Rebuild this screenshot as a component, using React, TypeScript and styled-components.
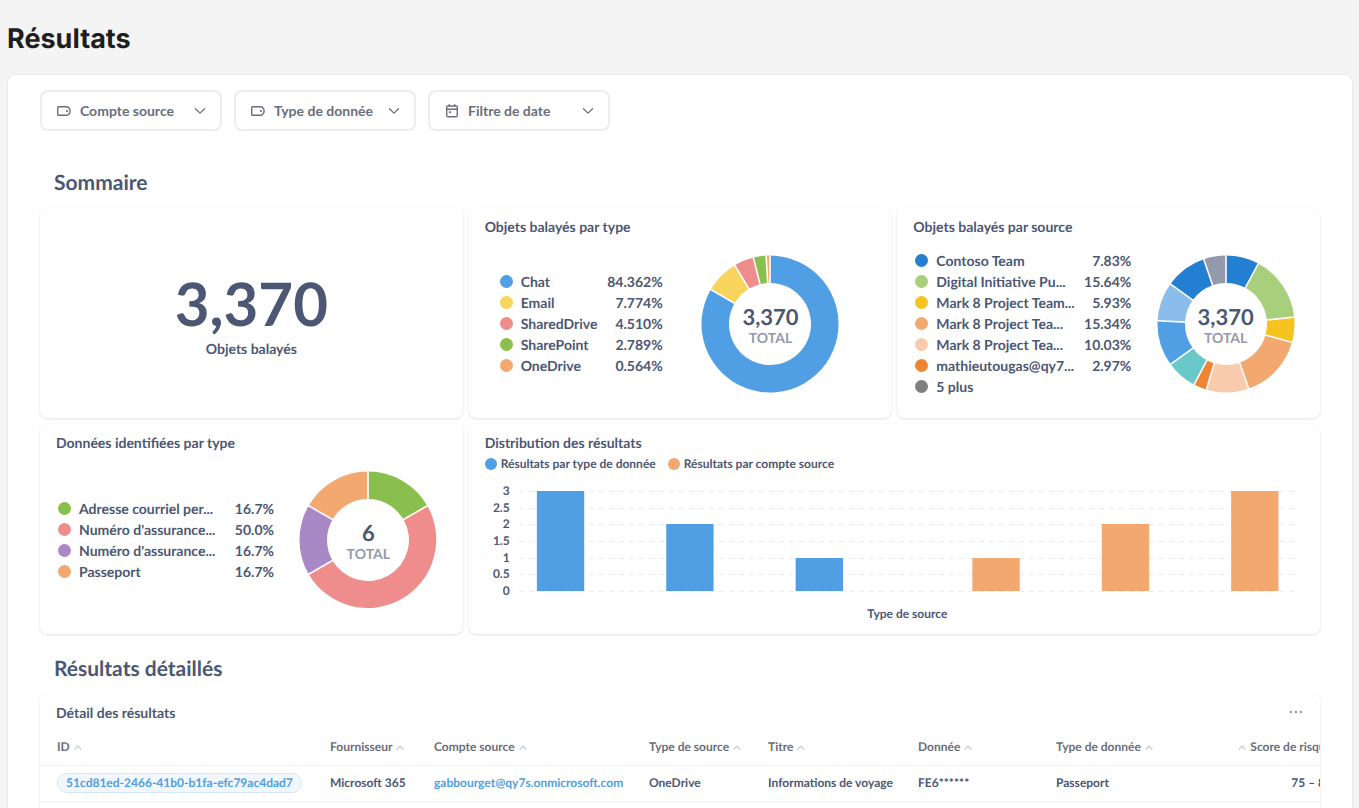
import React from "react";
import styled, { createGlobalStyle } from "styled-components";

const GlobalStyle = createGlobalStyle`
  *, *::before, *::after { box-sizing: border-box; }
  body {
    margin: 0;
    background: #f4f4f4;
    color: #4c5773;
    font-family: Lato, "Liberation Sans", sans-serif;
    font-weight: 700;
    text-rendering: geometricPrecision;
  }
`;

const Page = styled.div`
  min-height: 100vh;
  display: flex;
  flex-direction: column;
  padding: 0 6px 0 7px;
`;

const PageTitle = styled.h1`
  margin: 0;
  padding: 19px 0 15px;
  font: 700 27px/40px Inter, "Liberation Sans", sans-serif;
  color: #1e1e1e;
`;

const Panel = styled.main`
  flex: 1;
  display: flex;
  flex-direction: column;
  padding: 15px 32px 0;
  background: #fff;
  border: 1px solid #ebebeb;
  border-bottom: 0;
  border-radius: 8px 8px 0 0;
`;

const FilterBar = styled.div`
  display: flex;
  gap: 12px;
`;

const FilterButton = styled.button`
  width: 182px;
  height: 41px;
  display: flex;
  align-items: center;
  gap: 9px;
  padding: 0 14px 0 15px;
  background: #fff;
  border: 2px solid #eeecec;
  border-radius: 8px;
  color: #696e7b;
  font: inherit;
  font-size: 14px;
  line-height: 20px;
  text-align: left;
  cursor: pointer;
`;

const FilterLabel = styled.span`
  flex: 1;
`;

const SectionTitle = styled.h2<{ $top: number }>`
  margin: ${(p) => p.$top}px 0 0;
  padding: 0 14px 13px;
  font-size: 21px;
  line-height: 24px;
`;

const CardGrid = styled.section`
  display: grid;
  grid-template-columns: repeat(3, 1fr);
  grid-auto-rows: 210px;
  gap: 6px;
`;

const Card = styled.article<{ $span?: number }>`
  grid-column: span ${(p) => p.$span ?? 1};
  min-width: 0;
  display: flex;
  flex-direction: column;
  background: #fff;
  border-radius: 8px;
  box-shadow: 0 1px 3px rgba(0, 0, 0, 0.13);
`;

const CardTitle = styled.h3`
  margin: 0;
  padding: 9px 16px 0;
  font-size: 14px;
  line-height: 20px;
`;

const BigNumber = styled.div`
  flex: 1;
  display: flex;
  flex-direction: column;
  align-items: center;
  justify-content: center;
`;

const BigValue = styled.span`
  font-size: 60px;
  line-height: 72px;
`;

const BigLabel = styled.span`
  font-size: 14px;
  line-height: 20px;
`;

const DonutBody = styled.div<{ $inset: number }>`
  flex: 1;
  display: flex;
  align-items: center;
  padding: 0 ${(p) => p.$inset}px 8px;
`;

const Legend = styled.ul<{ $width: number }>`
  flex: none;
  width: ${(p) => p.$width}px;
  margin: 0 0 0 18px;
  padding: 0;
  list-style: none;
`;

const LegendRow = styled.li`
  display: flex;
  align-items: center;
  font-size: 14px;
  line-height: 21px;
`;

const Dot = styled.span<{ $color: string; $size?: number }>`
  flex: none;
  width: ${(p) => p.$size ?? 13}px;
  height: ${(p) => p.$size ?? 13}px;
  border-radius: 50%;
  background: ${(p) => p.$color};
`;

const LegendName = styled.span`
  flex: 1;
  padding-left: 8px;
  white-space: nowrap;
`;

const DonutHolder = styled.div`
  flex: 1;
  display: grid;
  place-items: center;
  & > * { grid-area: 1 / 1; }
`;

const DonutCenter = styled.div`
  display: flex;
  flex-direction: column;
  align-items: center;
  padding-top: 4px;
`;

const DonutValue = styled.span`
  font-size: 22px;
  line-height: 24px;
`;

const DonutCaption = styled.span`
  font-size: 14px;
  line-height: 18px;
  color: #949aab;
`;

const SeriesLegend = styled.div`
  display: flex;
  gap: 12px;
  padding: 3px 16px 0;
`;

const SeriesItem = styled.span`
  display: flex;
  align-items: center;
  gap: 4px;
  font-size: 12px;
  line-height: 16px;
`;

const ChartRow = styled.div`
  display: flex;
  gap: 9px;
  padding: 11px 25px 0 16px;
`;

const AxisLabels = styled.div`
  width: 25px;
  height: 116px;
  display: flex;
  flex-direction: column;
  justify-content: space-between;
  text-align: right;
  font-size: 12px;
  line-height: 16px;
`;

const Plot = styled.svg`
  flex: 1;
  min-width: 0;
  height: 102px;
  margin-top: 7px;
`;

const AxisTitle = styled.div`
  padding: 7px 24px 0 50px;
  text-align: center;
  font-size: 12px;
  line-height: 16px;
`;

const TableCard = styled(Card)`
  flex: 1;
  overflow: hidden;
  border-radius: 8px 8px 0 0;
`;

const TableHeader = styled.header`
  display: flex;
  justify-content: space-between;
  padding-right: 17px;
`;

const MoreButton = styled.button`
  margin-top: 10px;
  padding: 0;
  height: 20px;
  border: 0;
  background: none;
  color: #949aab;
  cursor: pointer;
`;

const Table = styled.table`
  width: 1308px;
  margin-top: 6px;
  table-layout: fixed;
  border-collapse: collapse;
  font-size: 12px;
  line-height: 16px;
`;

const Th = styled.th<{ $right?: boolean }>`
  height: 35px;
  padding: 0 16px;
  text-align: ${(p) => (p.$right ? "right" : "left")};
  border-bottom: 1px solid #f3f3f4;
  color: #696e7b;
  white-space: nowrap;
  svg { margin: 0 4px; color: #c5c8d0; vertical-align: middle; }
  &:first-child { padding-left: 17px; }
`;

const Td = styled.td<{ $right?: boolean }>`
  height: 36px;
  padding: 0 16px;
  text-align: ${(p) => (p.$right ? "right" : "left")};
  border-bottom: 1px solid #f3f3f4;
  white-space: nowrap;
  &:first-child { padding-left: 17px; }
`;

const Pill = styled.a`
  display: inline-block;
  padding: 1px 8px;
  border: 1px solid #d5e7f8;
  border-radius: 10px;
  background: #f1f7fe;
  color: #509ee3;
  text-decoration: none;
`;

const Link = styled.a`
  color: #509ee3;
  text-decoration: none;
`;

const LabelIcon = () => (
  <svg width="14" height="14" viewBox="0 0 14 14" fill="none" stroke="currentColor" strokeWidth="1.4" aria-hidden="true">
    <path d="M1.700 2.700h8.300c.5 0 .9.2 1.200.5l1.300 1.500c.3.3.5.7.5 1.200v2.200c0 .5-.2.900-.5 1.200l-1.300 1.500c-.3.3-.7.5-1.200.5H1.700a1 1 0 0 1-1-1V3.700a1 1 0 0 1 1-1z" />
    <circle cx="10" cy="7" r="1.100" fill="currentColor" stroke="none" />
  </svg>
);

const CalendarIcon = () => (
  <svg width="14" height="14" viewBox="0 0 14 14" fill="none" stroke="currentColor" strokeWidth="1.4" aria-hidden="true">
    <rect x="1.700" y="2" width="10.600" height="10.800" rx="1.200" />
    <path d="M1.700 5.300h10.600M4.200 .3v2M9.800 .3v2" />
    <rect x="4" y="7.200" width="2" height="1.800" rx=".3" fill="currentColor" stroke="none" />
  </svg>
);

const ChevronIcon = () => (
  <svg width="12" height="12" viewBox="0 0 12 12" fill="none" stroke="currentColor" strokeWidth="1.2" strokeLinecap="round" strokeLinejoin="round" aria-hidden="true">
    <path d="M1.500 3.700 6 8.100l4.500-4.400" />
  </svg>
);

const SortIcon = () => (
  <svg width="8" height="8" viewBox="0 0 8 8" fill="none" stroke="currentColor" strokeWidth="1.200" aria-hidden="true">
    <path d="M.6 5.600 4 2.200l3.400 3.400" />
  </svg>
);

const DotsIcon = () => (
  <svg width="14" height="14" viewBox="0 0 14 14" fill="currentColor" aria-hidden="true">
    <circle cx="2" cy="6" r="1.200" />
    <circle cx="6.900" cy="6" r="1.200" />
    <circle cx="11.800" cy="6" r="1.200" />
  </svg>
);

type Slice = { value: number; color: string };

const CENTER = 69;
const OUTER = 68.5;
const INNER = 41;

function slicePath(from: number, to: number) {
  const at = (turn: number, r: number) => {
    const a = turn * 2 * Math.PI;
    return `${(CENTER + r * Math.sin(a)).toFixed(2)} ${(CENTER - r * Math.cos(a)).toFixed(2)}`;
  };
  const large = to - from > 0.5 ? 1 : 0;
  return `M${at(from, OUTER)}A${OUTER} ${OUTER} 0 ${large} 1 ${at(to, OUTER)}L${at(to, INNER)}A${INNER} ${INNER} 0 ${large} 0 ${at(from, INNER)}Z`;
}

function Donut({ slices, total }: { slices: Slice[]; total: string }) {
  const sum = slices.reduce((s, x) => s + x.value, 0);
  let pos = 0;
  const arcs = slices.map((s) => {
    const from = pos / sum;
    pos += s.value;
    return { from, to: pos / sum, color: s.color };
  });
  return (
    <DonutHolder>
      <svg width={138} height={138} viewBox="0 0 138 138" aria-hidden="true">
        {arcs.map((a, i) => (
          <path key={i} d={slicePath(a.from, a.to)} fill={a.color} />
        ))}
        {arcs.map((a, i) => (
          <line key={i} x1={CENTER} y1={CENTER - INNER + 1} x2={CENTER} y2={-1} stroke="#fff" strokeWidth={1.6} transform={`rotate(${a.from * 360} ${CENTER} ${CENTER})`} />
        ))}
      </svg>
      <DonutCenter>
        <DonutValue>{total}</DonutValue>
        <DonutCaption>TOTAL</DonutCaption>
      </DonutCenter>
    </DonutHolder>
  );
}

type LegendItem = { name: string; pct?: string; color: string };

function DonutCard(props: { title: string; items: LegendItem[]; slices: Slice[]; total: string; legendWidth: number; inset?: number }) {
  return (
    <Card>
      <CardTitle>{props.title}</CardTitle>
      <DonutBody $inset={props.inset ?? 0}>
        <Legend $width={props.legendWidth}>
          {props.items.map((it, i) => (
            <LegendRow key={i}>
              <Dot $color={it.color} />
              <LegendName>{it.name}</LegendName>
              <span>{it.pct}</span>
            </LegendRow>
          ))}
        </Legend>
        <Donut slices={props.slices} total={props.total} />
      </DonutBody>
    </Card>
  );
}

const byType: LegendItem[] = [
  { name: "Chat", pct: "84.362%", color: "#509ee3" },
  { name: "Email", pct: "7.774%", color: "#f9d45c" },
  { name: "SharedDrive", pct: "4.510%", color: "#ef8c8c" },
  { name: "SharePoint", pct: "2.789%", color: "#88bf4d" },
  { name: "OneDrive", pct: "0.564%", color: "#f2a86f" },
];

const byTypeSlices: Slice[] = [
  { value: 83.4, color: "#509ee3" },
  { value: 8, color: "#f9d45c" },
  { value: 4.7, color: "#ef8c8c" },
  { value: 3, color: "#88bf4d" },
  { value: 0.9, color: "#f2a86f" },
];

const bySource: LegendItem[] = [
  { name: "Contoso Team", pct: "7.83%", color: "#227fd2" },
  { name: "Digital Initiative Pu...", pct: "15.64%", color: "#a8d07c" },
  { name: "Mark 8 Project Team...", pct: "5.93%", color: "#f7c41f" },
  { name: "Mark 8 Project Tea...", pct: "15.34%", color: "#f2a86f" },
  { name: "Mark 8 Project Tea...", pct: "10.03%", color: "#f7cbab" },
  { name: "mathieutougas@qy7...", pct: "2.97%", color: "#ed8535" },
  { name: "5 plus", color: "#7f7f7f" },
];

const bySourceSlices: Slice[] = [
  { value: 7.83, color: "#227fd2" },
  { value: 15.64, color: "#a8d07c" },
  { value: 5.93, color: "#f7c41f" },
  { value: 15.34, color: "#f2a86f" },
  { value: 10.03, color: "#f7cbab" },
  { value: 3.1, color: "#ed8535" },
  { value: 7.3, color: "#69c8c8" },
  { value: 10.8, color: "#509ee3" },
  { value: 9.2, color: "#8abdec" },
  { value: 9.8, color: "#227fd2" },
  { value: 5.3, color: "#949aab" },
];

const byData: LegendItem[] = [
  { name: "Adresse courriel per...", pct: "16.7%", color: "#88bf4d" },
  { name: "Numéro d'assurance...", pct: "50.0%", color: "#ef8c8c" },
  { name: "Numéro d'assurance...", pct: "16.7%", color: "#a989c5" },
  { name: "Passeport", pct: "16.7%", color: "#f2a86f" },
];

const byDataSlices: Slice[] = [
  { value: 1, color: "#88bf4d" },
  { value: 3, color: "#ef8c8c" },
  { value: 1, color: "#a989c5" },
  { value: 1, color: "#f2a86f" },
];

const ticks = ["3", "2.5", "2", "1.5", "1", "0.5", "0"];

const bars = [
  { value: 3, series: 0 },
  { value: 2, series: 0 },
  { value: 1, series: 0 },
  { value: 1, series: 1 },
  { value: 2, series: 1 },
  { value: 3, series: 1 },
];

const seriesColors = ["#509ee3", "#f2a86f"];

function BarChart() {
  return (
    <>
      <ChartRow>
        <AxisLabels>
          {ticks.map((t) => (
            <span key={t}>{t}</span>
          ))}
        </AxisLabels>
        <Plot aria-hidden="true">
          {ticks.map((t) => {
            const y = 100 - Math.round((Number(t) * 100) / 3) + 1.5;
            return <line key={t} x1="0" x2="100%" y1={y} y2={y} stroke="#ececee" strokeDasharray="5 5" />;
          })}
          {bars.map((b, i) => {
            const h = Math.round((b.value * 100) / 3);
            const x = (i * 100) / 6 + (b.series ? 8.4 : 2.3);
            return <rect key={i} x={`${x}%`} y={101 - h} width="6.1%" height={h} fill={seriesColors[b.series]} />;
          })}
        </Plot>
      </ChartRow>
      <AxisTitle>Type de source</AxisTitle>
    </>
  );
}

const columns = [
  { name: "ID", width: 274 },
  { name: "Fournisseur", width: 104 },
  { name: "Compte source", width: 215 },
  { name: "Type de source", width: 119 },
  { name: "Titre", width: 150 },
  { name: "Donnée", width: 138 },
  { name: "Type de donnée", width: 130 },
];

export default function App() {
  return (
    <>
      <GlobalStyle />
      <Page>
        <PageTitle>Résultats</PageTitle>
        <Panel>
          <FilterBar>
            <FilterButton type="button">
              <LabelIcon />
              <FilterLabel>Compte source</FilterLabel>
              <ChevronIcon />
            </FilterButton>
            <FilterButton type="button">
              <LabelIcon />
              <FilterLabel>Type de donnée</FilterLabel>
              <ChevronIcon />
            </FilterButton>
            <FilterButton type="button">
              <CalendarIcon />
              <FilterLabel>Filtre de date</FilterLabel>
              <ChevronIcon />
            </FilterButton>
          </FilterBar>

          <SectionTitle $top={40}>Sommaire</SectionTitle>
          <CardGrid>
            <Card>
              <BigNumber>
                <BigValue>3,370</BigValue>
                <BigLabel>Objets balayés</BigLabel>
              </BigNumber>
            </Card>
            <DonutCard title="Objets balayés par type" items={byType} slices={byTypeSlices} total="3,370" legendWidth={163} inset={13} />
            <DonutCard title="Objets balayés par source" items={bySource} slices={bySourceSlices} total="3,370" legendWidth={216} />
            <DonutCard title="Données identifiées par type" items={byData} slices={byDataSlices} total="6" legendWidth={216} />
            <Card $span={2}>
              <CardTitle>Distribution des résultats</CardTitle>
              <SeriesLegend>
                <SeriesItem>
                  <Dot $color={seriesColors[0]} $size={12} />
                  Résultats par type de donnée
                </SeriesItem>
                <SeriesItem>
                  <Dot $color={seriesColors[1]} $size={12} />
                  Résultats par compte source
                </SeriesItem>
              </SeriesLegend>
              <BarChart />
            </Card>
          </CardGrid>

          <SectionTitle $top={23}>Résultats détaillés</SectionTitle>
          <TableCard>
            <TableHeader>
              <CardTitle>Détail des résultats</CardTitle>
              <MoreButton type="button" aria-label="Plus d'options">
                <DotsIcon />
              </MoreButton>
            </TableHeader>
            <Table>
              <colgroup>
                {columns.map((c) => (
                  <col key={c.name} width={c.width} />
                ))}
                <col />
              </colgroup>
              <thead>
                <tr>
                  {columns.map((c) => (
                    <Th key={c.name}>
                      {c.name}
                      <SortIcon />
                    </Th>
                  ))}
                  <Th $right>
                    <SortIcon />
                    Score de risque
                  </Th>
                </tr>
              </thead>
              <tbody>
                <tr>
                  <Td>
                    <Pill href="#">51cd81ed-2466-41b0-b1fa-efc79ac4dad7</Pill>
                  </Td>
                  <Td>Microsoft 365</Td>
                  <Td>
                    <Link href="#">gabbourget@qy7s.onmicrosoft.com</Link>
                  </Td>
                  <Td>OneDrive</Td>
                  <Td>Informations de voyage</Td>
                  <Td>FE6******</Td>
                  <Td>Passeport</Td>
                  <Td $right>75 – 89</Td>
                </tr>
              </tbody>
            </Table>
          </TableCard>
        </Panel>
      </Page>
    </>
  );
}
